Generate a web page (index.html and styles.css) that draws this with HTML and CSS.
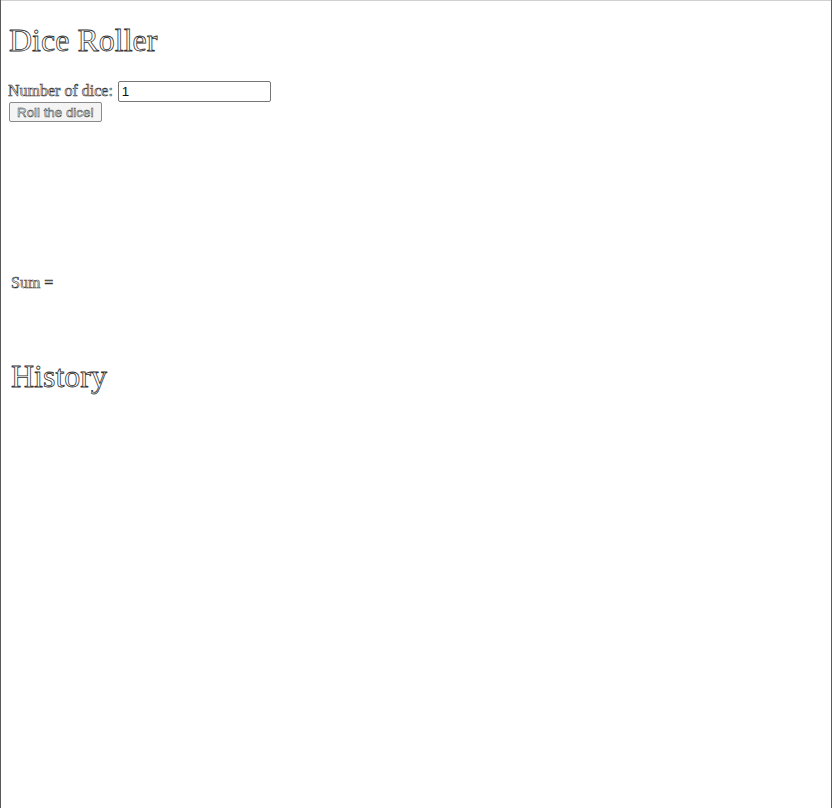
FILE: index.html
```html
<!DOCTYPE html>
<html>
<head>
<meta charset="utf-8">
<title>Dice Roller</title>
<link rel="stylesheet" href="styles.css">
</head>
<body>
<h1 class="title">Dice Roller</h1>
<div class="controls">
<label class="label" for="count">Number of dice:</label> <input class="count" id="count" type="text" value="1"><br>
<button class="roll" type="button">Roll the dice!</button>
</div>
<div class="results">
<div class="dice"></div>
<p class="sum">Sum =</p>
<h1 class="history">History</h1>
</div>
</body>
</html>
```
FILE: styles.css
```css
html {
  min-height: 100%;
  background: #fff;
  box-shadow: inset 1px 0 0 #5a5a5a, inset -1px 0 0 #5a5a5a, inset 0 1px 0 #d0d0d0;
}
body {
  margin: 8px;
  font-family: "Liberation Serif", "Times New Roman", serif;
  font-size: 16px;
  color: #444;
}
.title, .history {
  font-size: 32px;
  font-weight: normal;
  color: #fff;
  -webkit-text-stroke: 0.8px #333;
}
.title {
  margin: 14px 0 22px;
  padding-left: 1px;
}
.label {
  color: #fff;
  -webkit-text-stroke: 0.6px #333;
}
.count {
  font-family: "Liberation Sans", Arial, sans-serif;
  font-size: 13.33px;
  color: #111;
  border: 1px solid #767676;
  border-radius: 2px;
  padding: 2px 3px;
  width: 145px;
  margin: 0 0 0 1px;
}
.roll {
  font-family: "Liberation Sans", Arial, sans-serif;
  font-size: 13.33px;
  color: #fff;
  -webkit-text-stroke: 0.5px #333;
  background: #f4f4f4;
  border: 1px solid #8a8a8a;
  border-radius: 2px;
  padding: 2px 7px 1px;
  margin: 0 0 0 1px;
}
.results {
  padding: 0 3px;
}
.dice {
  height: 152px;
}
.sum {
  margin: 0;
  color: #fff;
  -webkit-text-stroke: 0.6px #333;
}
.history {
  margin: 66px 0 0;
}
```
